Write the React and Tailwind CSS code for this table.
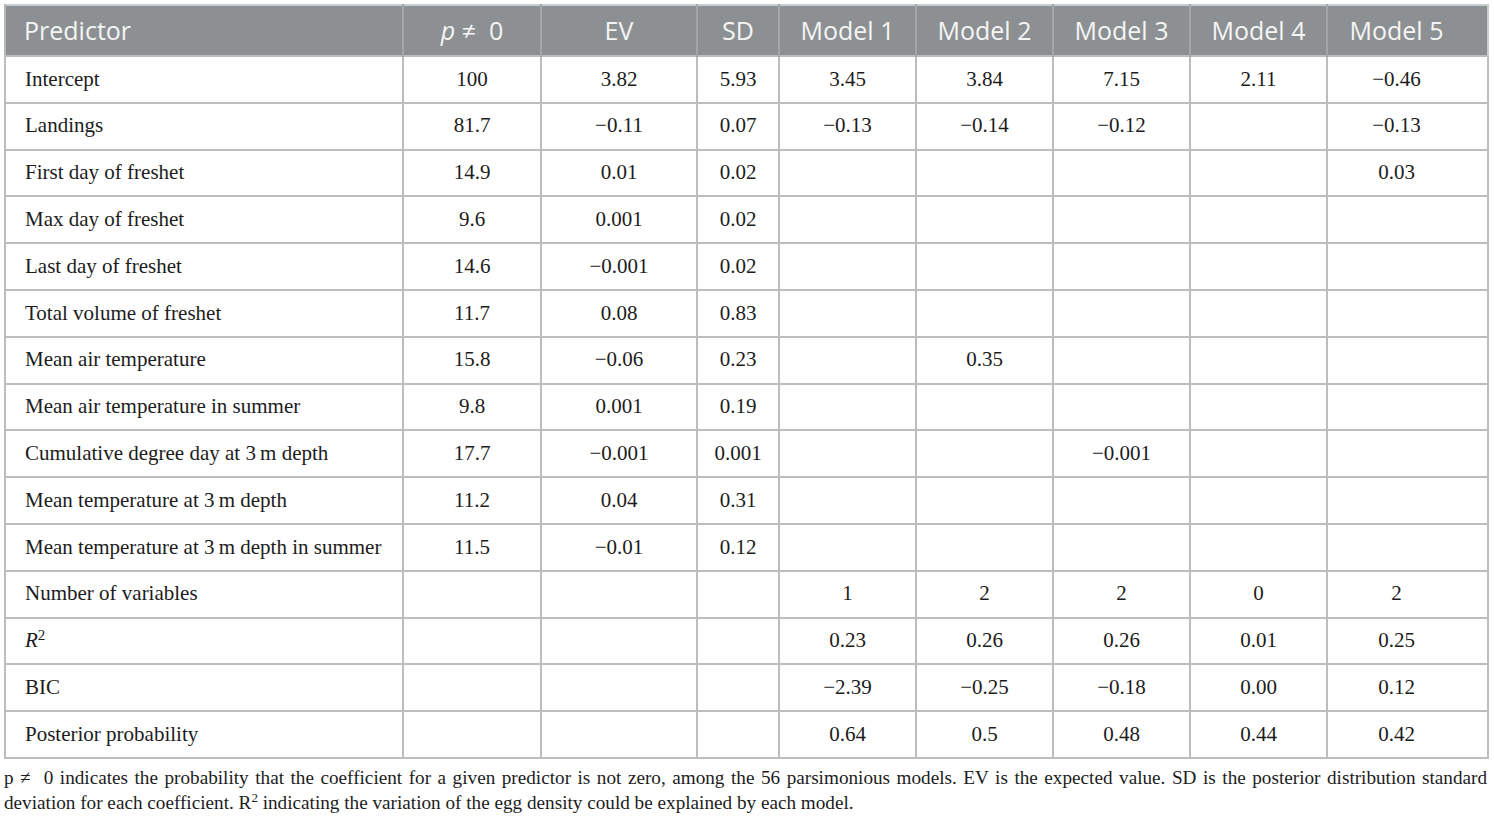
import React from "react";

const M = "\u2212";
const rows = [
  ["Intercept", "100", "3.82", "5.93", "3.45", "3.84", "7.15", "2.11", M + "0.46"],
  ["Landings", "81.7", M + "0.11", "0.07", M + "0.13", M + "0.14", M + "0.12", "", M + "0.13"],
  ["First day of freshet", "14.9", "0.01", "0.02", "", "", "", "", "0.03"],
  ["Max day of freshet", "9.6", "0.001", "0.02", "", "", "", "", ""],
  ["Last day of freshet", "14.6", M + "0.001", "0.02", "", "", "", "", ""],
  ["Total volume of freshet", "11.7", "0.08", "0.83", "", "", "", "", ""],
  ["Mean air temperature", "15.8", M + "0.06", "0.23", "", "0.35", "", "", ""],
  ["Mean air temperature in summer", "9.8", "0.001", "0.19", "", "", "", "", ""],
  ["Cumulative degree day at 3\u2009m depth", "17.7", M + "0.001", "0.001", "", "", M + "0.001", "", ""],
  ["Mean temperature at 3\u2009m depth", "11.2", "0.04", "0.31", "", "", "", "", ""],
  ["Mean temperature at 3\u2009m depth in summer", "11.5", M + "0.01", "0.12", "", "", "", "", ""],
  ["Number of variables", "", "", "", "1", "2", "2", "0", "2"],
  ["R2", "", "", "", "0.23", "0.26", "0.26", "0.01", "0.25"],
  ["BIC", "", "", "", M + "2.39", M + "0.25", M + "0.18", "0.00", "0.12"],
  ["Posterior probability", "", "", "", "0.64", "0.5", "0.48", "0.44", "0.42"],
];

const widths = [398, 138, 156, 82, 137, 137, 137, 137, 161];

export default function App() {
  const sans = { fontFamily: '"Open Sans", "Noto Sans", sans-serif' };
  const serif = { fontFamily: '"Liberation Serif", "DejaVu Serif", serif' };
  return (
    <div className="w-[1494px] h-[819px] bg-white pt-[4px] px-[4px]">
      <table className="table-fixed border-collapse w-[1484px]" style={serif}>
        <colgroup>
          {widths.map((w, i) => (
            <col key={i} style={{ width: w }} />
          ))}
        </colgroup>
        <thead>
          <tr className="h-[51px] bg-[#8c9093] text-[#f4f5f5] text-[25px] border-t-2 border-t-[#c9cdce]" style={sans}>
            <th className="text-left font-normal pl-[18px] border-l-2 border-l-[#b8b8b8] border-r-2 border-r-[#a3a7a9]">Predictor</th>
            <th className="font-normal border-r-2 border-r-[#a3a7a9]">
              <span className="italic">p</span> ≠ &nbsp;0
            </th>
            <th className="font-normal border-r-2 border-r-[#a3a7a9]">EV</th>
            <th className="font-normal border-r-2 border-r-[#a3a7a9]">SD</th>
            <th className="font-normal border-r-2 border-r-[#a3a7a9]">Model 1</th>
            <th className="font-normal border-r-2 border-r-[#a3a7a9]">Model 2</th>
            <th className="font-normal border-r-2 border-r-[#a3a7a9]">Model 3</th>
            <th className="font-normal border-r-2 border-r-[#a3a7a9]">Model 4</th>
            <th className="font-normal pr-[22px] border-r-2 border-r-[#c9cdce]">Model 5</th>
          </tr>
        </thead>
        <tbody className="text-[21px] text-[#1c1c1c]">
          {rows.map((r, i) => (
            <tr key={i} className="h-[46.8px]">
              {r.map((c, j) => (
                <td
                  key={j}
                  className={
                    "border-2 border-[#bdbdbd] " +
                    (j === 0 ? "text-left pl-[19px]" : j === 8 ? "text-center pr-[22px]" : "text-center")
                  }
                >
                  {c === "R2" ? (
                    <span>
                      <span className="italic">R</span>
                      <sup className="text-[15px]">2</sup>
                    </span>
                  ) : (
                    c
                  )}
                </td>
              ))}
            </tr>
          ))}
        </tbody>
      </table>
      <p className="text-[19.2px] leading-[25px] text-[#1c1c1c] text-justify mt-[6px] w-[1483px]" style={serif}>
        p ≠ &nbsp;0 indicates the probability that the coefficient for a given predictor is not zero, among the 56 parsimonious models. EV is the expected value. SD is the posterior distribution standard deviation for each coefficient. R<sup className="text-[13px]">2</sup> indicating the variation of the egg density could be explained by each model.
      </p>
    </div>
  );
}
